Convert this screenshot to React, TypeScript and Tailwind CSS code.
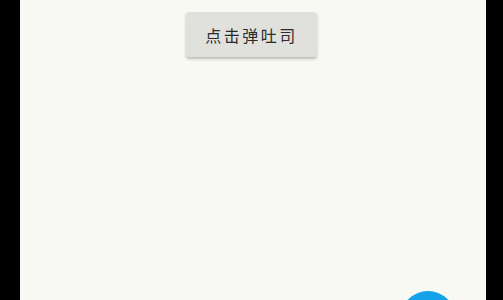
export default function App() {
  return (
    <div className="flex h-[300px] w-full overflow-hidden bg-black pl-[20px]">
      <div className="relative flex h-full w-[466px] flex-col items-center bg-[#f9f9f4] pr-[3px]">
        <button className="mt-[12px] h-[45px] w-[131px] rounded-[3px] bg-[#e0e0dc] text-[16px] tracking-[2.5px] text-[#2b2b2b] shadow-[0_2px_3px_rgba(0,0,0,0.25)] [font-family:'Noto_Sans_CJK_SC',sans-serif]">
          点击弹吐司
        </button>
        <div className="absolute left-[380px] top-[291px] h-[56px] w-[56px] rounded-full bg-[#14a3ea]" />
      </div>
    </div>
  );
}
